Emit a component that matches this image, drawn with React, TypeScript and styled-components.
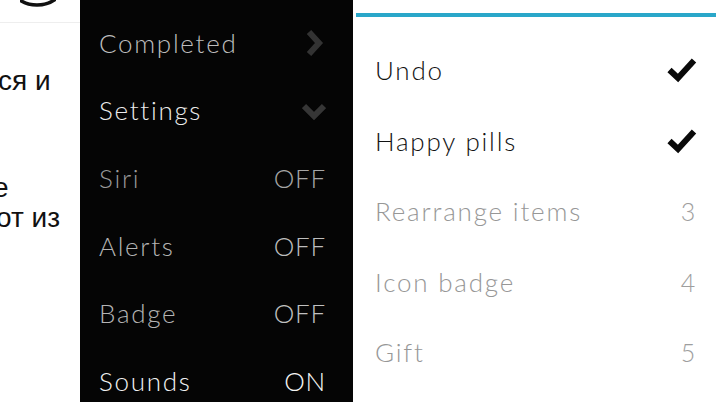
import React from "react";
import styled, { createGlobalStyle } from "styled-components";

const Global = createGlobalStyle`
  html, body { margin: 0; padding: 0; background: #fff; }
  body { width: 720px; height: 402px; overflow: hidden; }
`;

const Page = styled.div`
  display: flex;
  width: 720px;
  height: 402px;
  overflow: hidden;
  background: #fff;
  font-family: Lato, "Noto Sans", sans-serif;
  font-weight: 300;
`;

const LeftStrip = styled.div`
  width: 80px;
  flex: none;
  display: flex;
  flex-direction: column;
  background: #fff;
  overflow: hidden;
`;

const ArcIcon = styled.svg`
  display: block;
  margin-left: 20px;
  width: 36px;
  height: 8px;
`;

const FaintRule = styled.div`
  margin-top: 14px;
  height: 1px;
  background: #eeeeee;
`;

const FragmentLine = styled.div<{ $shift: number; $top: number }>`
  margin-top: ${(p) => p.$top}px;
  margin-left: ${(p) => p.$shift}px;
  white-space: nowrap;
  font-family: "Liberation Sans", Arial, sans-serif;
  font-weight: 400;
  font-size: 28px;
  line-height: 30px;
  color: #111;
`;

const DarkPanel = styled.div`
  width: 273px;
  flex: none;
  background: #050505;
  display: flex;
  flex-direction: column;
`;

const DarkRule = styled.div`
  margin-top: 19px;
  height: 2px;
  background: #242424;
`;

const DarkList = styled.div`
  display: flex;
  flex-direction: column;
  margin-top: -10px;
  padding: 0 27px 0 19px;
`;

const DarkRow = styled.div<{ $tone: string }>`
  height: 67.6px;
  flex: none;
  display: flex;
  align-items: center;
  justify-content: space-between;
  font-size: 26px;
  letter-spacing: 1.7px;
  color: ${(p) => p.$tone};
`;

const DarkValue = styled.span<{ $tone: string }>`
  color: ${(p) => p.$tone};
  letter-spacing: 0.8px;
`;

const Chevron = styled.svg`
  display: block;
  width: 24px;
  height: 26px;
`;

const LightPanel = styled.div`
  flex: 1;
  display: flex;
  flex-direction: column;
  background: #fff;
`;

const AccentBar = styled.div`
  margin: 13px 4px 0 3px;
  height: 4px;
  background: #2aa7c9;
`;

const LightList = styled.div`
  display: flex;
  flex-direction: column;
  padding: 18px 23px 0 22px;
`;

const LightRow = styled.div<{ $muted?: boolean }>`
  height: 70.5px;
  flex: none;
  display: flex;
  align-items: center;
  justify-content: space-between;
  font-size: 26px;
  letter-spacing: 1.8px;
  color: ${(p) => (p.$muted ? "#979797" : "#121212")};
`;

const Count = styled.span`
  color: #9e9e9e;
  font-size: 25px;
`;

const Check = () => (
  <svg width="30" height="26" viewBox="0 0 30 26">
    <path d="M2.5 13 L11 21 L27 3.5" fill="none" stroke="#0a0a0a" strokeWidth="6" strokeLinejoin="miter" />
  </svg>
);

const darkRows = [
  { label: "Siri", value: "OFF", tone: "#9a9a9a", vtone: "#a5a5a5" },
  { label: "Alerts", value: "OFF", tone: "#b4b4b4", vtone: "#bdbdbd" },
  { label: "Badge", value: "OFF", tone: "#b4b4b4", vtone: "#c0c0c0" },
  { label: "Sounds", value: "ON", tone: "#f2f2f2", vtone: "#f5f5f5" },
];

const lightRows = [
  { label: "Rearrange items", count: "3" },
  { label: "Icon badge", count: "4" },
  { label: "Gift", count: "5" },
];

export default function App() {
  return (
    <>
      <Global />
      <Page>
        <LeftStrip>
          <ArcIcon viewBox="0 0 36 8">
            <circle cx="17" cy="-27" r="32" fill="none" stroke="#111" strokeWidth="3.5" />
          </ArcIcon>
          <FaintRule />
          <FragmentLine $shift={-2} $top={43}>ся и</FragmentLine>
          <FragmentLine $shift={-7} $top={77}>е</FragmentLine>
          <FragmentLine $shift={-4} $top={0}>от из</FragmentLine>
        </LeftStrip>
        <DarkPanel>
          <DarkRule />
          <DarkList>
            <DarkRow $tone="#bdbdbd">
              Completed
              <Chevron viewBox="0 0 24 26">
                <path d="M7 2 L17 13 L7 24" fill="none" stroke="#333" strokeWidth="6" />
              </Chevron>
            </DarkRow>
            <DarkRow $tone="#ececec">
              Settings
              <Chevron viewBox="0 0 24 26">
                <path d="M2 9 L12 19 L22 9" fill="none" stroke="#363636" strokeWidth="6" />
              </Chevron>
            </DarkRow>
            {darkRows.map((r) => (
              <DarkRow key={r.label} $tone={r.tone}>
                {r.label}
                <DarkValue $tone={r.vtone}>{r.value}</DarkValue>
              </DarkRow>
            ))}
          </DarkList>
        </DarkPanel>
        <LightPanel>
          <AccentBar />
          <LightList>
            <LightRow>
              Undo
              <Check />
            </LightRow>
            <LightRow>
              Happy pills
              <Check />
            </LightRow>
            {lightRows.map((r) => (
              <LightRow key={r.label} $muted>
                {r.label}
                <Count>{r.count}</Count>
              </LightRow>
            ))}
          </LightList>
        </LightPanel>
      </Page>
    </>
  );
}
